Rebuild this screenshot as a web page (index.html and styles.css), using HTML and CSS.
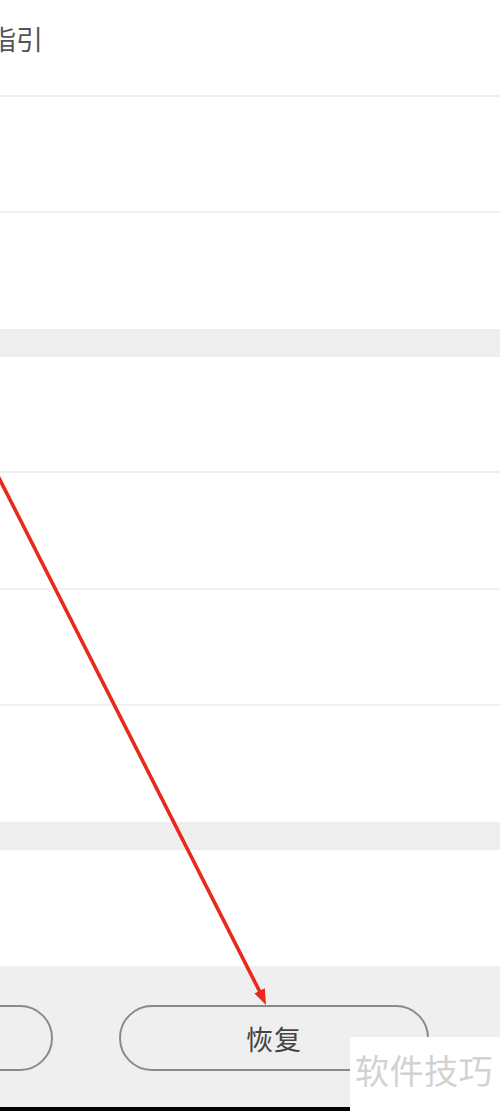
FILE: index.html
```html
<!DOCTYPE html>
<html>

<head>
    <meta charset="UTF-8">
    <title>恢复</title>
    <link rel="stylesheet" href="styles.css">
</head>

<body>
    <div class="page">
        <div class="head">
            <span class="title">指引</span>
        </div>
        <div class="row"></div>
        <div class="row last"></div>
        <div class="band"></div>
        <div class="row"></div>
        <div class="row tall"></div>
        <div class="row"></div>
        <div class="row last"></div>
        <div class="band"></div>
        <div class="row last"></div>

        <div class="bottom">
            <div class="btns">
                <div class="btn"></div>
                <div class="btn">恢复</div>
            </div>
        </div>
        <div class="navbar"></div>

        <!-- red arrow drawn over the screenshot -->
        <svg class="arrow" width="500" height="1111" viewBox="0 0 500 1111">
            <line x1="-2" y1="476" x2="261" y2="994" stroke="#e8291c" stroke-width="3.6" />
            <polygon points="266,1005 254.5,993.5 264.8,988.3" fill="#e8291c" />
        </svg>

        <div class="mark">软件技巧</div>
    </div>
</body>

</html>
```

FILE: styles.css
```css
* {
    box-sizing: border-box;
}

body {
    margin: 0;
    background-color: #fff;
    font-family: "Noto Sans CJK SC", "Noto Sans", sans-serif;
    overflow: hidden;
}

.page {
    position: relative;
    width: 500px;
    height: 1111px;
    overflow: hidden;
    display: flex;
    flex-direction: column;
}

.head {
    height: 97px;
    border-bottom: 2px solid #f0f0f0;
    padding-top: 19px;
    flex-shrink: 0;
}

.title {
    display: block;
    margin-left: -11px;
    font-size: 27px;
    line-height: 40px;
    color: #555;
}

.row {
    height: 116px;
    border-bottom: 2px solid #f0f0f0;
    flex-shrink: 0;
}

.row.tall {
    height: 117px;
}

.row.last {
    border-bottom: none;
}

.band {
    height: 28px;
    background-color: #eeeeee;
    flex-shrink: 0;
}

.bottom {
    height: 141px;
    background-color: #efefef;
    padding-top: 39px;
    flex-shrink: 0;
}

.btns {
    display: flex;
    gap: 66px;
    margin-left: -257px;
}

.btn {
    width: 310px;
    height: 66px;
    flex-shrink: 0;
    border: 2px solid #8a8a8a;
    border-radius: 33px;
    display: flex;
    align-items: center;
    justify-content: center;
    font-size: 27px;
    color: #444;
    letter-spacing: 1px;
}

.navbar {
    flex: 1;
    background-color: #000;
}

.arrow {
    position: absolute;
    top: 0;
    left: 0;
}

.mark {
    position: absolute;
    left: 350px;
    top: 1037px;
    width: 150px;
    height: 74px;
    background-color: #fff;
    color: #d2d2d2;
    font-size: 34px;
    line-height: 36px;
    padding: 15px 0 0 5px;
    letter-spacing: 0.5px;
}
```
